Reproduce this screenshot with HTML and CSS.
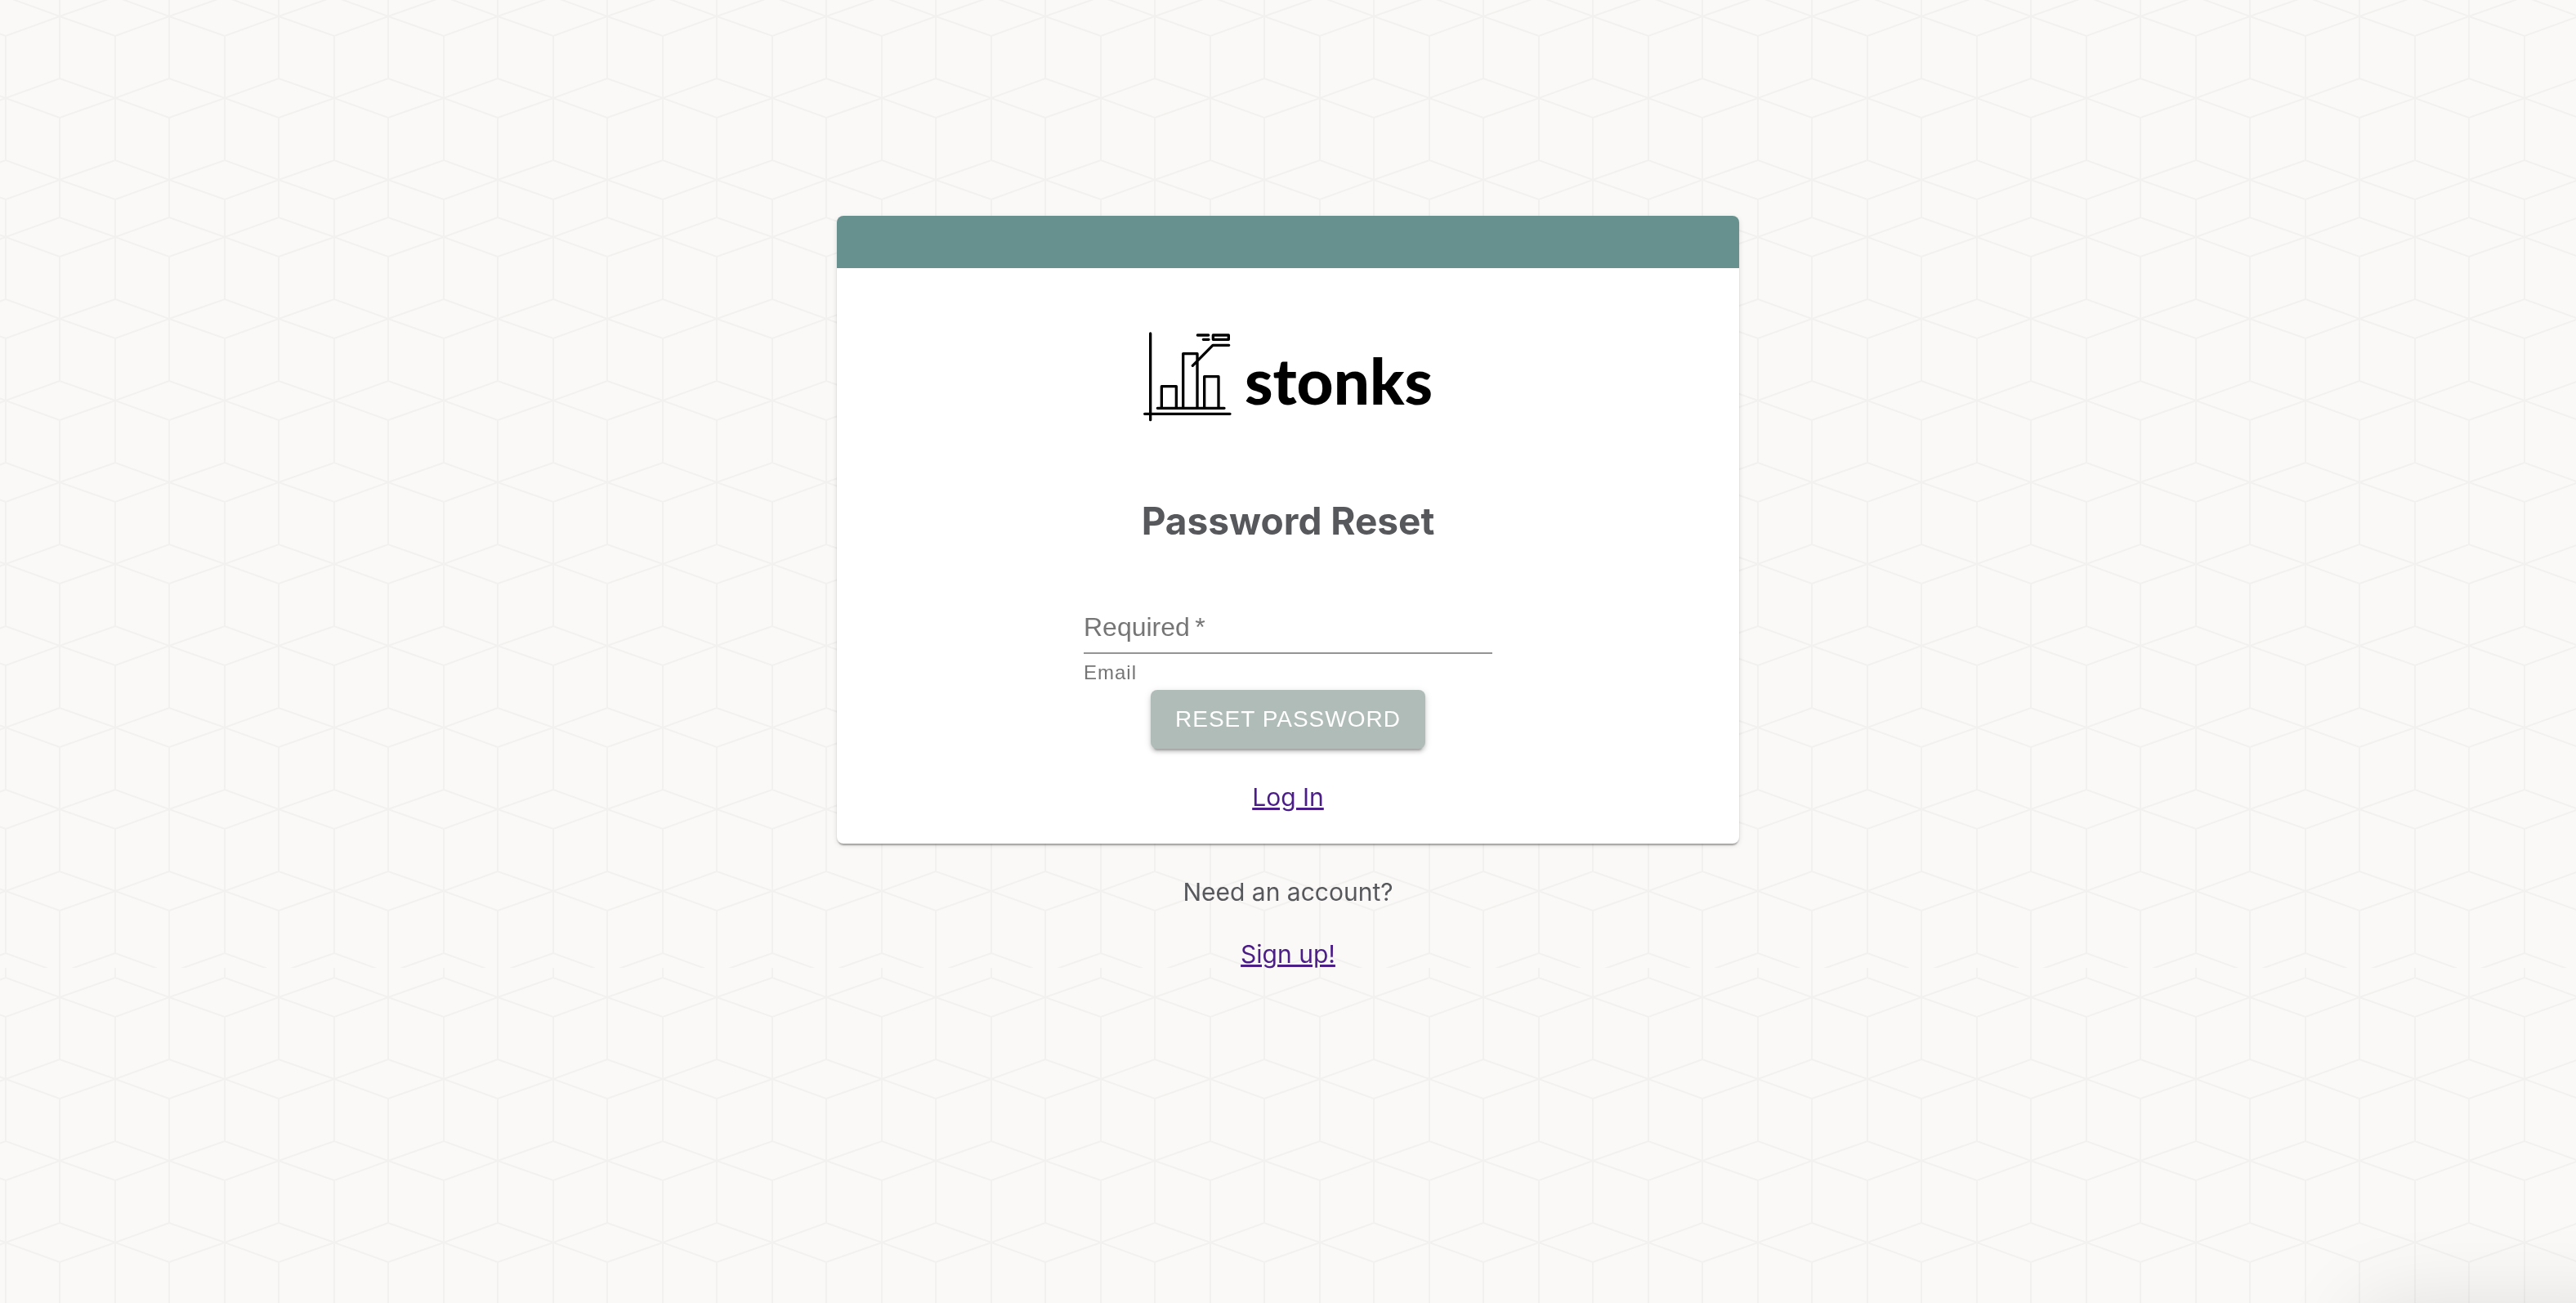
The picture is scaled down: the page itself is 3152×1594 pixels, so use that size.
FILE: index.html
```html
<!DOCTYPE html>
<html lang="en">
<head>
<meta charset="utf-8">
<meta name="viewport" content="width=device-width, initial-scale=1">
<title>Stonks - Password Reset</title>
<link rel="stylesheet" href="styles.css">
</head>
<body>
<svg class="backdrop" aria-hidden="true">
  <defs>
    <g id="row-a">
      <path d="M-35 0L33 -24L99 0L167 -24M-35 0L33 24L99 0L167 24"/>
    </g>
    <g id="row-b">
      <path d="M-35 -24L33 0L99 -24L167 0M-35 24L33 0L99 24L167 0"/>
    </g>
    <clipPath id="seam">
      <rect x="-40" y="1170" width="220" height="30"/>
    </clipPath>
    <pattern id="cubes" x="-26" y="-16" width="134" height="1600" patternUnits="userSpaceOnUse">
      <g class="cube-lines">
        <use href="#row-a" y="36"/>
        <use href="#row-b" y="136"/>
        <use href="#row-a" y="236"/>
        <use href="#row-b" y="306"/>
        <use href="#row-a" y="406"/>
        <use href="#row-b" y="506"/>
        <use href="#row-a" y="606"/>
        <use href="#row-b" y="706"/>
        <use href="#row-a" y="806"/>
        <use href="#row-b" y="906"/>
        <use href="#row-a" y="1006"/>
        <use href="#row-b" y="1106"/>
        <g clip-path="url(#seam)"><use href="#row-a" y="1206"/></g>
        <use href="#row-a" y="1236"/>
        <use href="#row-b" y="1336"/>
        <use href="#row-a" y="1436"/>
        <use href="#row-b" y="1536"/>
        <path d="M33 0V12M33 60V212M33 260V382M33 430V582M33 630V782M33 830V982M33 1030V1182M33 1200V1212M33 1260V1412M33 1460V1600"/>
        <path d="M99 0V112M99 160V282M99 330V482M99 530V682M99 730V882M99 930V1082M99 1130V1312M99 1360V1512M99 1560V1600"/>
      </g>
    </pattern>
  </defs>
  <rect width="100%" height="100%" fill="url(#cubes)"/>
</svg>

<main class="page">
  <section class="card">
    <div class="card-bar"></div>
    <div class="card-body">
      <div class="logo">
        <svg class="logo-mark" viewBox="0 0 324 328" fill="none" stroke="#000" stroke-width="10" stroke-linecap="round" stroke-linejoin="round" aria-hidden="true">
          <path d="M26 5V322M5 300H318M52 279H297M67 279V199H121V279M146 279V79H198V279M224 279V163H276V279M181 123L255 48H314M199 11H239M220 27H240"/>
          <path d="M256 11H313V27H256Z"/>
        </svg>
        <span class="logo-name">stonks</span>
      </div>
      <h1 class="title">Password Reset</h1>
      <form class="form">
        <div class="field">
          <label class="field-label" for="email">Required&#8201;*</label>
          <input class="field-input" id="email" type="email" aria-describedby="email-help">
          <p class="field-help" id="email-help">Email</p>
        </div>
        <button class="button" type="button">RESET PASSWORD</button>
      </form>
      <a class="link" href="#login">Log In</a>
    </div>
  </section>
  <p class="prompt">Need an account?</p>
  <a class="link" href="#signup">Sign up!</a>
</main>
<div class="corner-shadow"></div>
</body>
</html>
```
FILE: styles.css
```css
* {
  box-sizing: border-box;
}

body {
  margin: 0;
  min-height: 100vh;
  background: #faf9f7;
  color: #57585c;
  font-family: Inter, "Liberation Sans", sans-serif;
  font-size: 30px;
  line-height: 38px;
}

.backdrop {
  position: fixed;
  inset: 0;
  z-index: -1;
  width: 100%;
  height: 100%;
}

.cube-lines {
  fill: none;
  stroke: #f2f1ef;
  stroke-width: 2;
}

.page {
  display: flex;
  flex-direction: column;
  align-items: center;
  padding: 264px 24px 64px;
}

.card {
  width: 100%;
  max-width: 1104px;
  overflow: hidden;
  border-radius: 8px;
  background: #fff;
  box-shadow: 0 4px 2px -2px rgba(0, 0, 0, 0.2), 0 2px 2px rgba(0, 0, 0, 0.14), 0 2px 6px rgba(0, 0, 0, 0.12);
}

.card-bar {
  height: 64px;
  background: #67918e;
}

.card-body {
  display: flex;
  flex-direction: column;
  align-items: center;
  padding: 78px 32px 38px;
}

.logo {
  display: flex;
  align-items: center;
  gap: 16px;
  color: #000;
}

.logo-mark {
  width: 108px;
  height: 110px;
}

.logo-name {
  padding-top: 8px;
  font-family: Lato, sans-serif;
  font-size: 78px;
  font-weight: 900;
  line-height: 96px;
}

.title {
  margin: 92px 0 70px;
  font-size: 46px;
  font-weight: 700;
  line-height: 58px;
}

.form {
  display: flex;
  flex-direction: column;
  align-items: center;
  width: 100%;
  margin-bottom: 40px;
}

.field {
  position: relative;
  width: 100%;
  max-width: 500px;
  color: #757575;
  font-family: "Liberation Sans", sans-serif;
  font-size: 32px;
}

.field-label {
  position: absolute;
  top: 12px;
  left: 0;
}

.field-input {
  display: block;
  width: 100%;
  height: 64px;
  padding: 12px 0 14px;
  border: 0;
  border-bottom: 2px solid #949494;
  border-radius: 0;
  outline: 0;
  background: transparent;
  color: #212121;
  font: inherit;
}

.field-help {
  margin: 4px 0 2px;
  font-size: 24px;
  letter-spacing: 1px;
}

.button {
  padding: 12px 30px;
  border: 0;
  border-radius: 8px;
  background: #b0bcb8;
  box-shadow: 0 6px 2px -4px rgba(0, 0, 0, 0.2), 0 4px 4px rgba(0, 0, 0, 0.14), 0 2px 10px rgba(0, 0, 0, 0.12);
  color: #fff;
  font-family: "Liberation Sans", sans-serif;
  font-size: 28px;
  letter-spacing: 1px;
  line-height: 48px;
}

.link {
  color: #4b1e87;
}

.prompt {
  margin: 40px 0 38px;
}

.corner-shadow {
  position: fixed;
  right: -100px;
  bottom: -208px;
  width: 360px;
  height: 200px;
  box-shadow: 0 0 110px rgba(0, 0, 0, 0.12);
}
```
